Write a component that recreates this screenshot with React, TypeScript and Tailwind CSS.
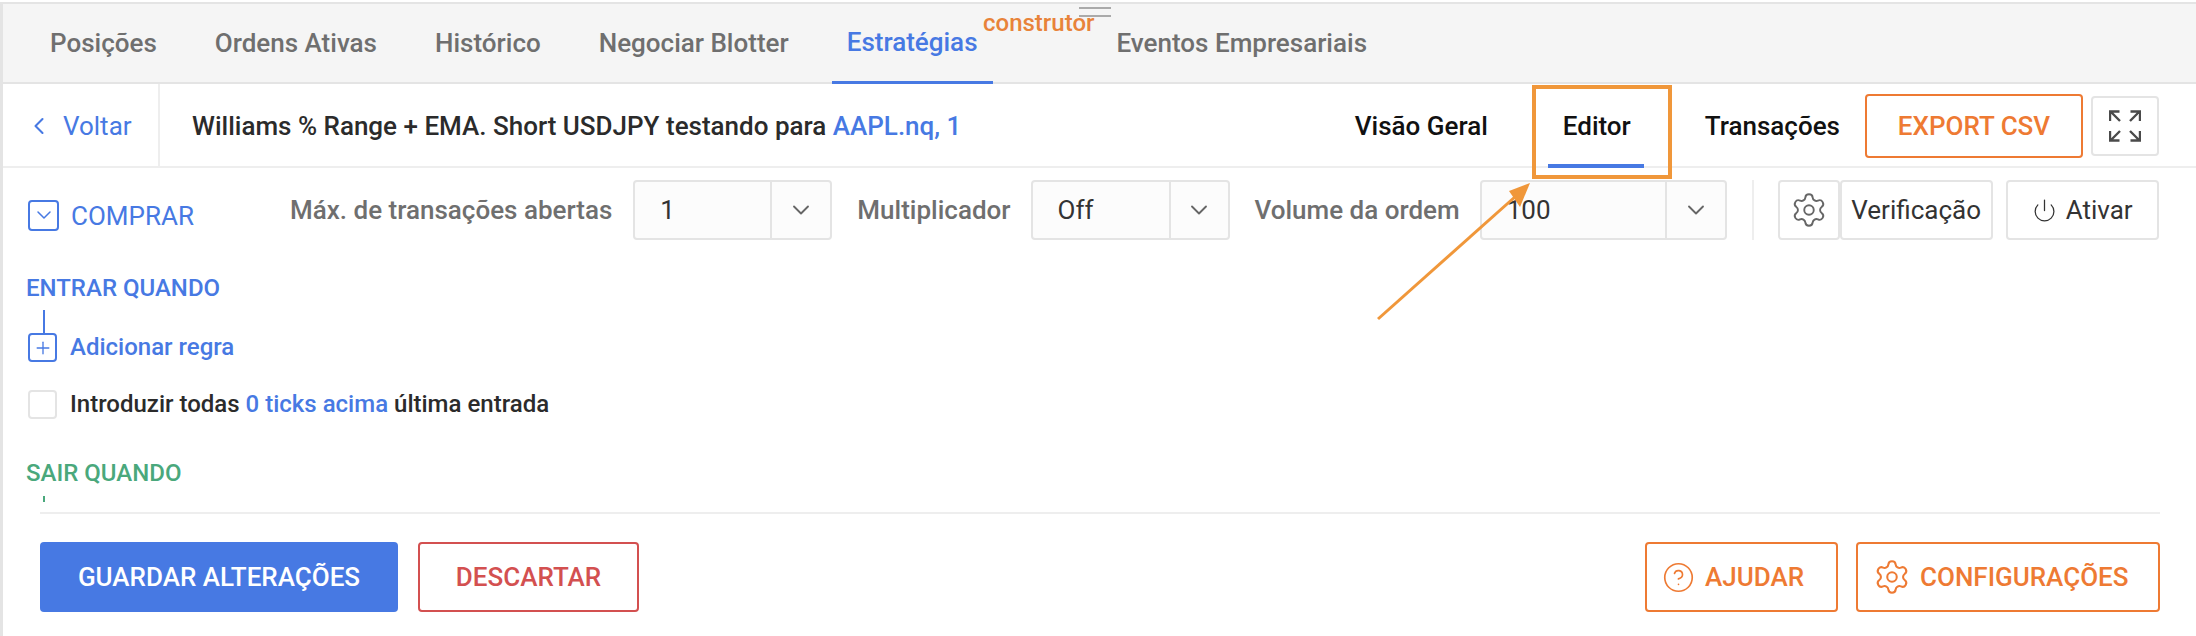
import { ChevronDown, ChevronLeft, CircleHelp, Plus, Power, Settings } from "lucide-react";

const tabs = ["Posições", "Ordens Ativas", "Histórico", "Negociar Blotter"];

function Select({ value, width, arrowWidth }: { value: string; width: string; arrowWidth: string }) {
  return (
    <div className={`flex h-[60px] ${width} rounded-[4px] border-2 border-[#e4e4e4] bg-[#fcfcfc]`}>
      <div className="flex-1 pl-[25px] text-[26px] leading-[56px] text-[#333]">{value}</div>
      <div className={`flex ${arrowWidth} items-center justify-center border-l-2 border-[#e4e4e4]`}>
        <ChevronDown className="h-[28px] w-[28px] text-[#666]" strokeWidth={1.6} />
      </div>
    </div>
  );
}

function FullscreenIcon() {
  return (
    <svg width="32" height="32" viewBox="0 0 32 32" fill="none" stroke="#4a4a4a" strokeWidth="2.4">
      <path d="M1 11V1.5H10.5M1.5 1.5L11 11" />
      <path d="M31 11V1.5H21.5M30.5 1.5L21 11" />
      <path d="M1 21V30.5H10.5M1.5 30.5L11 21" />
      <path d="M31 21V30.5H21.5M30.5 30.5L21 21" />
    </svg>
  );
}

export default function App() {
  return (
    <div className="relative h-[636px] w-[2196px] overflow-hidden bg-white pt-[2px] font-['Roboto',sans-serif]">
      <div className="flex h-full flex-col border-l-[3px] border-t-2 border-[#e4e4e4]">
        {/* top tabs */}
        <div className="relative flex h-[80px] shrink-0 items-stretch border-b-2 border-[#e4e4e4] bg-[#f5f5f5] pl-[32px] text-[26px] font-medium text-[#6f6f6f]">
          {tabs.map((t) => (
            <div key={t} className="mr-[28px] flex items-center px-[15px]">
              {t}
            </div>
          ))}
          <div className="relative -mb-[2px] flex items-center border-b-[3px] border-[#4779e3] px-[15px] text-[#4779e3]">
            Estratégias
          </div>
          <div className="ml-[124px] flex items-center">Eventos Empresariais</div>
          <span className="absolute left-[980px] top-[6px] text-[24px] font-medium leading-[26px] text-[#e8833a]">construtor</span>
          <div className="absolute left-[1076px] top-[3px] h-[10px] w-[32px] border-y-2 border-[#aaaaaa]" />
        </div>

        {/* strategy header */}
        <div className="flex h-[84px] shrink-0 items-stretch border-b-2 border-[#eeeeee] pt-[2px] text-[26px] font-medium">
          <div className="-mt-[2px] flex w-[157px] items-center gap-[10px] border-r-2 border-[#eeeeee] pl-[22px] pt-[2px] font-normal text-[#4779e3]">
            <ChevronLeft className="h-[28px] w-[28px]" strokeWidth={1.8} />
            Voltar
          </div>
          <div className="flex flex-1 items-center pl-[32px] text-[#2b2b2b]">
            Williams % Range + EMA. Short USDJPY testando para&nbsp;
            <span className="text-[#4779e3]">AAPL.nq, 1</span>
          </div>
          <div className="flex items-center pr-[37px] text-[#111]">
            <div className="mr-[75px]">Visão Geral</div>
            <div className="relative mr-[74px] flex h-full items-center">
              Editor
              <div className="absolute -left-[15px] -right-[13px] bottom-[-2px] h-[4px] bg-[#4779e3]" />
            </div>
            <div className="mr-[25px]">Transações</div>
            <div className="mr-[8px] flex h-[64px] w-[218px] items-center justify-center rounded-[4px] border-2 border-[#ee7a33] text-[#ee7a33]">
              EXPORT CSV
            </div>
            <div className="flex h-[60px] w-[68px] items-center justify-center rounded-[4px] border-2 border-[#e4e4e4]">
              <FullscreenIcon />
            </div>
          </div>
        </div>

        {/* settings row */}
        <div className="mt-[12px] flex h-[60px] shrink-0 items-center text-[26px]">
          <div className="ml-[25px] mt-[10px] flex w-[262px] items-center gap-[12px] text-[#4779e3]">
            <div className="flex h-[31px] w-[31px] items-center justify-center rounded-[4px] border-2 border-[#4779e3]">
              <ChevronDown className="h-[24px] w-[24px]" strokeWidth={1.5} />
            </div>
            <span className="pt-[3px]">COMPRAR</span>
          </div>
          <div className="mr-[21px] font-medium text-[#6f6f6f]">Máx. de transações abertas</div>
          <Select value="1" width="w-[199px]" arrowWidth="w-[60px]" />
          <div className="ml-[25px] mr-[20px] font-medium text-[#6f6f6f]">Multiplicador</div>
          <Select value="Off" width="w-[199px]" arrowWidth="w-[59px]" />
          <div className="ml-[25px] mr-[20px] font-medium text-[#6f6f6f]">Volume da ordem</div>
          <Select value="100" width="w-[247px]" arrowWidth="w-[60px]" />
          <div className="ml-[25px] mr-[24px] h-[60px] w-[2px] bg-[#eeeeee]" />
          <div className="flex h-[60px] w-[62px] items-center justify-center rounded-[4px] border-2 border-[#e4e4e4]">
            <Settings className="h-[38px] w-[38px] text-[#666]" strokeWidth={1.2} />
          </div>
          <div className="flex h-[60px] w-[153px] items-center justify-center rounded-[4px] border-2 border-[#e4e4e4] text-[#333]">
            Verificação
          </div>
          <div className="ml-[13px] flex h-[60px] w-[153px] items-center justify-center gap-[9px] rounded-[4px] border-2 border-[#e4e4e4] text-[#333]">
            <Power className="h-[25px] w-[25px]" strokeWidth={1.2} />
            Ativar
          </div>
        </div>

        {/* rules */}
        <div className="flex-1 pl-[23px] text-[24px] font-medium">
          <div className="mt-[36px] leading-[24px] text-[#4779e3]">ENTRAR QUANDO</div>
          <div className="ml-[17px] mt-[10px] h-[23px] w-[2px] bg-[#4779e3]" />
          <div className="flex items-center gap-[13px] leading-[29px] text-[#4779e3]">
            <div className="ml-[2px] flex h-[29px] w-[29px] items-center justify-center rounded-[4px] border-2 border-[#4779e3]">
              <Plus className="h-[20px] w-[20px]" strokeWidth={1.6} />
            </div>
            <span>Adicionar regra</span>
          </div>
          <div className="mt-[28px] flex items-center gap-[13px] leading-[29px] text-[#2b2b2b]">
            <div className="ml-[2px] h-[29px] w-[29px] rounded-[4px] border-2 border-[#e4e4e4]" />
            <span>
              Introduzir todas <span className="text-[#4779e3]">0 ticks acima</span> última entrada
            </span>
          </div>
          <div className="mt-[42px] leading-[24px] text-[#4aa87c]">SAIR QUANDO</div>
          <div className="ml-[17px] mt-[11px] h-[6px] w-[2px] bg-[#4aa87c]" />
        </div>

        {/* footer */}
        <div className="ml-[37px] mr-[36px] flex h-[124px] shrink-0 items-start border-t-2 border-[#eeeeee] pt-[28px] text-[26px] font-medium">
          <div className="flex h-[70px] w-[358px] items-center justify-center rounded-[4px] bg-[#4779e3] text-white">
            GUARDAR ALTERAÇÕES
          </div>
          <div className="ml-[20px] flex h-[70px] w-[221px] items-center justify-center rounded-[4px] border-2 border-[#d35050] text-[#d35050]">
            DESCARTAR
          </div>
          <div className="ml-auto flex h-[70px] w-[193px] items-center gap-[10px] rounded-[4px] border-2 border-[#ee7a33] pl-[15px] text-[#ee7a33]">
            <CircleHelp className="h-[33px] w-[33px]" strokeWidth={1.2} />
            AJUDAR
          </div>
          <div className="ml-[18px] flex h-[70px] w-[304px] items-center gap-[9px] rounded-[4px] border-2 border-[#ee7a33] pl-[15px] text-[#ee7a33]">
            <Settings className="h-[38px] w-[38px]" strokeWidth={1.3} />
            CONFIGURAÇÕES
          </div>
        </div>
      </div>

      {/* annotation over the screenshot */}
      <div className="absolute left-[1532px] top-[85px] h-[94px] w-[140px] border-[4px] border-[#f0973a]" />
      <svg className="absolute left-[1370px] top-[176px]" width="170" height="150" viewBox="0 0 170 150" fill="none">
        <path d="M8 143L146 20" stroke="#f0973a" strokeWidth="3" />
        <path d="M160 7L139 15L150 31Z" fill="#f0973a" />
      </svg>
    </div>
  );
}
